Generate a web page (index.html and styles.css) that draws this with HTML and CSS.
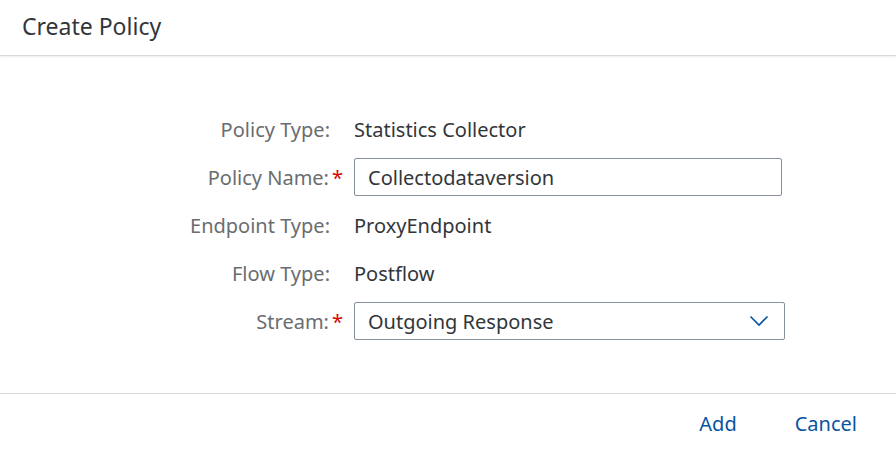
FILE: index.html
```html
<!DOCTYPE html>
<html>
<head>
<meta charset="utf-8">
<link rel="stylesheet" href="styles.css">
</head>
<body>
<div class="dialog">
  <header class="header"><h1 class="title">Create Policy</h1></header>
  <main class="content">
    <div class="form">
      <div class="label">Policy Type:</div>
      <div class="value">Statistics Collector</div>

      <div class="label">Policy Name:<span class="req">*</span></div>
      <div class="value"><div class="input">Collectodataversion</div></div>

      <div class="label">Endpoint Type:</div>
      <div class="value">ProxyEndpoint</div>

      <div class="label">Flow Type:</div>
      <div class="value">Postflow</div>

      <div class="label">Stream:<span class="req">*</span></div>
      <div class="value"><div class="input select"><span>Outgoing Response</span>
        <svg class="chev" width="20" height="12" viewBox="0 0 20 12"><path d="M1.5 1.5 L10 10 L18.5 1.5" fill="none" stroke="#0854a0" stroke-width="1.6"/></svg>
      </div></div>
    </div>
  </main>
  <footer class="footer">
    <button class="btn">Add</button>
    <button class="btn">Cancel</button>
  </footer>
</div>
</body>
</html>
```
FILE: styles.css
```css
html, body { margin: 0; padding: 0; background: #fff; }
body { font-family: "Noto Sans", "Liberation Sans", sans-serif; color: #32363a; }
.dialog { width: 896px; height: 450px; display: flex; flex-direction: column; }
.header {
  height: 56px; display: flex; align-items: center; padding-left: 22px; padding-bottom: 4px; box-sizing: border-box;
  border-bottom: 1px solid #d9d9d9; box-shadow: 0 1px 2px rgba(0,0,0,0.08);
}
.title { margin: 0; font-weight: normal; font-size: 23px; color: #32363a; }
.content { flex: 1; padding-top: 49px; }
.form {
  display: grid; grid-template-columns: 343px 431px; column-gap: 11px;
  grid-auto-rows: 48px; align-items: center; font-size: 20px;
}
.label { text-align: right; color: #6a6d70; white-space: nowrap; }
.label .req { color: #d00; margin-left: 3px; }
.form .label:not(:has(.req)) { padding-right: 13px; }
.value { color: #32363a; }
.input {
  border: 1px solid #89919a; border-radius: 2px;
  display: flex; align-items: center; padding: 0 13px; box-sizing: border-box; height: 38px;
  width: 428px;
}
.select { justify-content: space-between; width: 431px; padding-right: 15px; }
.footer {
  height: 57px; border-top: 1px solid #d9d9d9; display: flex; justify-content: flex-end;
  align-items: center; padding-right: 10px; box-sizing: border-box; padding-top: 3px;
}
.btn {
  background: none; border: none; font-family: inherit; font-size: 20px; color: #0854a0;
  padding: 0 29px; height: 36px; cursor: pointer;
}
```
